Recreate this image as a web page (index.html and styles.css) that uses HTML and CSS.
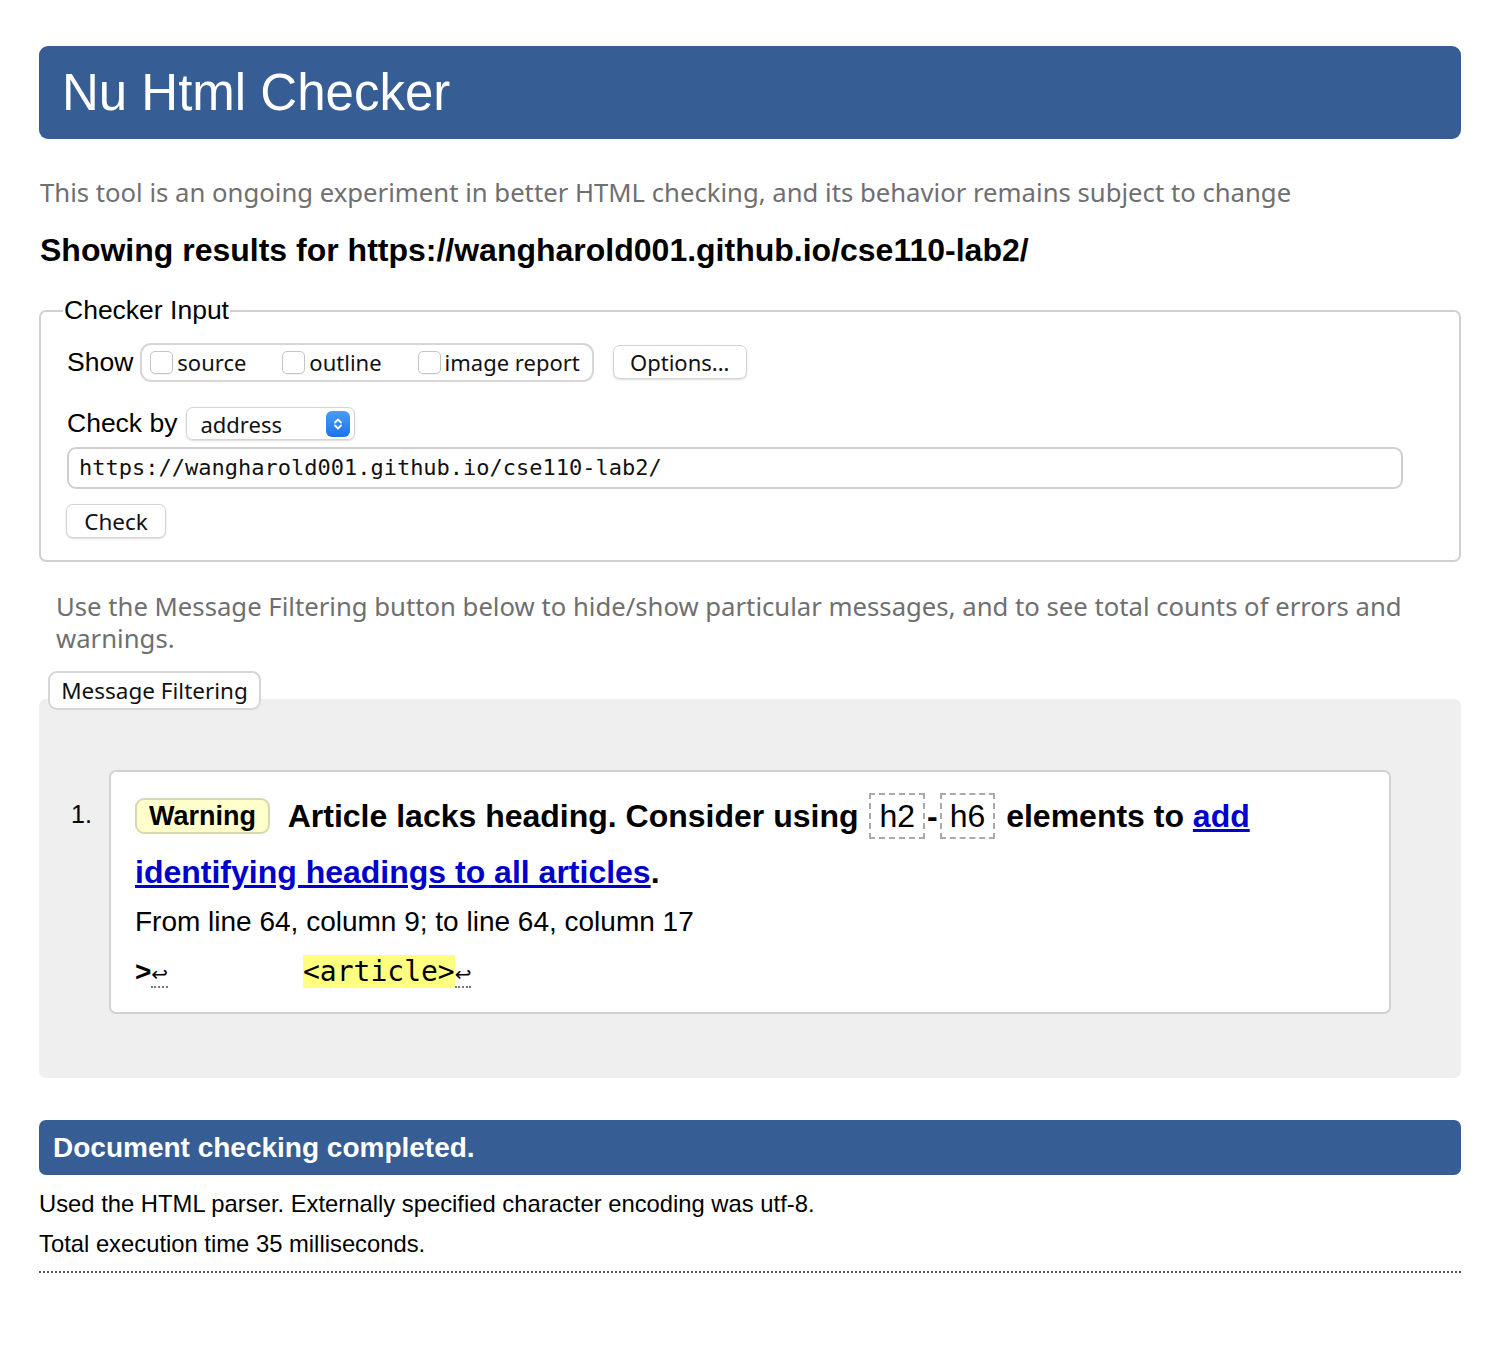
FILE: index.html
```html
<!DOCTYPE html>
<html>
<head>
<meta charset="utf-8">
<link rel="stylesheet" href="styles.css">
</head>
<body>
<div class="page">
  <h1 class="banner">Nu Html Checker</h1>
  <p class="intro">This tool is an ongoing experiment in better HTML checking, and its behavior remains subject to change</p>
  <h2 class="showing">Showing results for https://wangharold001.github.io/cse110-lab2/</h2>

  <fieldset class="input">
    <legend>Checker Input</legend>
    <div class="row show-row">
      <span class="lbl">Show</span>
      <div class="checks">
        <label class="chk"><span class="box"></span>source</label>
        <label class="chk"><span class="box"></span>outline</label>
        <label class="chk"><span class="box"></span>image report</label>
      </div>
      <span class="btn options">Options...</span>
    </div>
    <div class="row by-row">
      <span class="lbl">Check by</span>
      <span class="select">address
        <span class="stepper"><svg width="12" height="16" viewBox="0 0 12 16"><path d="M3 6.5 L6 3.5 L9 6.5" fill="none" stroke="#fff" stroke-width="1.8" stroke-linecap="round" stroke-linejoin="round"/><path d="M3 9.5 L6 12.5 L9 9.5" fill="none" stroke="#fff" stroke-width="1.8" stroke-linecap="round" stroke-linejoin="round"/></svg></span>
      </span>
    </div>
    <div class="url">https://wangharold001.github.io/cse110-lab2/</div>
    <span class="btn check">Check</span>
  </fieldset>

  <p class="filter-note">Use the Message Filtering button below to hide/show particular messages, and to see total counts of errors and warnings.</p>
  <div class="results">
    <span class="btn filter">Message Filtering</span>
    <ol class="messages">
      <li class="msg">
        <p class="msg-head"><span class="badge">Warning</span> <span class="msg-text">Article lacks heading. Consider using <code>h2</code>-<code>h6</code> elements to <a href="#">add identifying headings to all articles</a>.</span></p>
        <p class="loc">From line 64, column 9; to line 64, column 17</p>
        <p class="extract"><span class="lf">&gt;<span class="ret">↩</span></span>        <mark>&lt;article&gt;</mark><span class="ret">↩</span></p>
      </li>
    </ol>
  </div>

  <h2 class="done">Document checking completed.</h2>
  <p class="info first">Used the HTML parser. Externally specified character encoding was utf-8.</p>
  <p class="info">Total execution time 35 milliseconds.</p>
  <hr class="dots">
</div>
</body>
</html>
```

FILE: styles.css
```css
html, body { margin: 0; padding: 0; background: #fff; }
body { font-family: "Liberation Sans", Arial, sans-serif; color: #000; }
.page { margin: 46px 35px 0 39px; }

.banner {
  margin: 0;
  height: 93px;
  box-sizing: border-box;
  background: #365d94;
  color: #fff;
  border-radius: 9px;
  font-weight: normal;
  font-size: 51px;
  line-height: 93px;
  padding-left: 23px;
}

.intro {
  margin: 38px 0 0 1px;
  color: #6f6f6f;
  font-family: "Noto Sans", "Liberation Sans", sans-serif;
  font-size: 25.7px;
  line-height: 32px;
}

.showing {
  margin: 21px 0 0 1px;
  font-size: 32px;
  line-height: 40px;
  font-weight: bold;
}

fieldset.input {
  margin: 25px 0 0 0;
  border: 2px solid #d0d0d0;
  border-radius: 7px;
  padding: 10px 26px 22px 26px;
  font-family: "Noto Sans", "Liberation Sans", sans-serif;
}
legend {
  font-family: "Liberation Sans", sans-serif;
  font-size: 26.5px;
  padding: 0 1px;
  margin-left: -4px;
}
.row { display: flex; align-items: center; }
.lbl { font-family: "Liberation Sans", sans-serif; font-size: 26.5px; }
.show-row { margin-top: 6px; height: 40px; }
.checks {
  display: flex; align-items: center; gap: 0;
  margin-left: 7px;
  border: 2px solid #d6d6d6;
  border-radius: 11px;
  height: 39px; box-sizing: border-box;
  padding: 0 12px 0 8px;
  font-size: 22px;
}
.chk { display: flex; align-items: center; margin-right: 36px; color: #111; }
.chk:last-child { margin-right: 0; }
.box {
  width: 23px; height: 23px; box-sizing: border-box;
  border: 1px solid #c4c4c4; border-radius: 5px;
  margin-right: 4px; background: #fff;
  box-shadow: 0 1px 1px rgba(0,0,0,0.05);
}
.btn {
  display: inline-flex; align-items: center; justify-content: center;
  border: 1px solid #d4d4d4; border-radius: 7px;
  background: #fff; box-shadow: 0 1px 2px rgba(0,0,0,0.15);
  font-family: "Noto Sans", "Liberation Sans", sans-serif;
  font-size: 22px; color: #111;
  box-sizing: border-box;
}
.options { margin-left: 19px; width: 134px; height: 34px; }
.by-row { margin-top: 25px; }
.select {
  margin-left: 9px;
  position: relative;
  display: inline-flex; align-items: center;
  width: 169px; height: 33px; box-sizing: border-box;
  border: 1px solid #d4d4d4; border-radius: 7px;
  box-shadow: 0 1px 2px rgba(0,0,0,0.15);
  padding-left: 13px;
  font-size: 22px; color: #111;
}
.stepper {
  position: absolute; right: 4px; top: 3px;
  width: 24px; height: 26px; border-radius: 6px;
  background: linear-gradient(#4a9cf8, #1a74ec);
  display: flex; align-items: center; justify-content: center;
}
.url {
  margin-top: 7px;
  height: 42px; box-sizing: border-box;
  border: 2px solid #cfcfcf; border-radius: 9px;
  margin-right: 30px;
  font-family: "DejaVu Sans Mono", monospace;
  font-size: 22px; line-height: 38px;
  padding-left: 10px;
  color: #111;
}
.check { margin-top: 15px; width: 100px; height: 34px; margin-left: -1px; font-size: 22.5px; }

.filter-note {
  margin: 29px 40px 0 17px;
  color: #6f6f6f;
  font-family: "Noto Sans", "Liberation Sans", sans-serif;
  font-size: 25.7px;
  line-height: 32px;
}
.results {
  margin-top: 44px;
  background: #efefef;
  border-radius: 7px;
  padding: 1px 70px 64px 70px;
  position: relative;
}
.filter {
  position: absolute; left: 9px; top: -28px;
  width: 213px; height: 39px;
  border: 2px solid #d6d6d6; border-radius: 9px; box-shadow: none;
  font-size: 22.5px;
}
.messages {
  margin: 70px 0 0 0;
  padding: 0;
  list-style: none;
  counter-reset: m;
}
.msg {
  position: relative;
  background: #fff;
  border: 2px solid #d2d2d2;
  border-radius: 7px;
  padding: 16px 24px 22px 24px;
  counter-increment: m;
}
.msg::before {
  content: counter(m) ".";
  position: absolute;
  left: -40px; top: 28px;
  font-size: 25px;
}
.msg p { margin: 0; }
.msg-head { font-size: 32px; line-height: 56px; font-weight: bold; }
.badge {
  display: inline-block;
  background: #ffffcc;
  border: 2px solid #d8d8b0;
  border-radius: 9px;
  font-size: 27px;
  line-height: 32px;
  padding: 0 12px;
  vertical-align: 2px;
  margin-right: 10px;
}
code {
  font-family: "Liberation Sans", sans-serif;
  font-weight: normal;
  font-size: 32px;
  border: 2px dashed #aaa;
  padding: 3px 8px;
  margin: 0 2px;
}
a { color: #0000cc; }
.loc { font-size: 28px; line-height: 34px; margin-top: 5px !important; }
.extract {
  margin-top: 17px !important;
  font-family: "DejaVu Sans Mono", monospace;
  font-size: 28px; line-height: 32px;
  white-space: pre;
}
.extract .lf { font-family: "Liberation Sans", sans-serif; font-weight: bold; }
.ret { font-size: 20px; font-family: "DejaVu Sans", sans-serif; font-weight: normal; border-bottom: 2px dotted #777; }
mark { background: #ffff80; color: #000; }

.done {
  margin: 42px 0 0 0;
  height: 55px; box-sizing: border-box;
  background: #365d94; color: #fff;
  border-radius: 7px;
  font-size: 28px; line-height: 55px;
  padding-left: 14px;
}
.info { margin: 0; font-size: 23.8px; line-height: 40px; }
.info.first { margin-top: 9px; }
.dots { margin: 7px 0 0 0; border: none; border-top: 2px dotted #555; height: 0; }
```
